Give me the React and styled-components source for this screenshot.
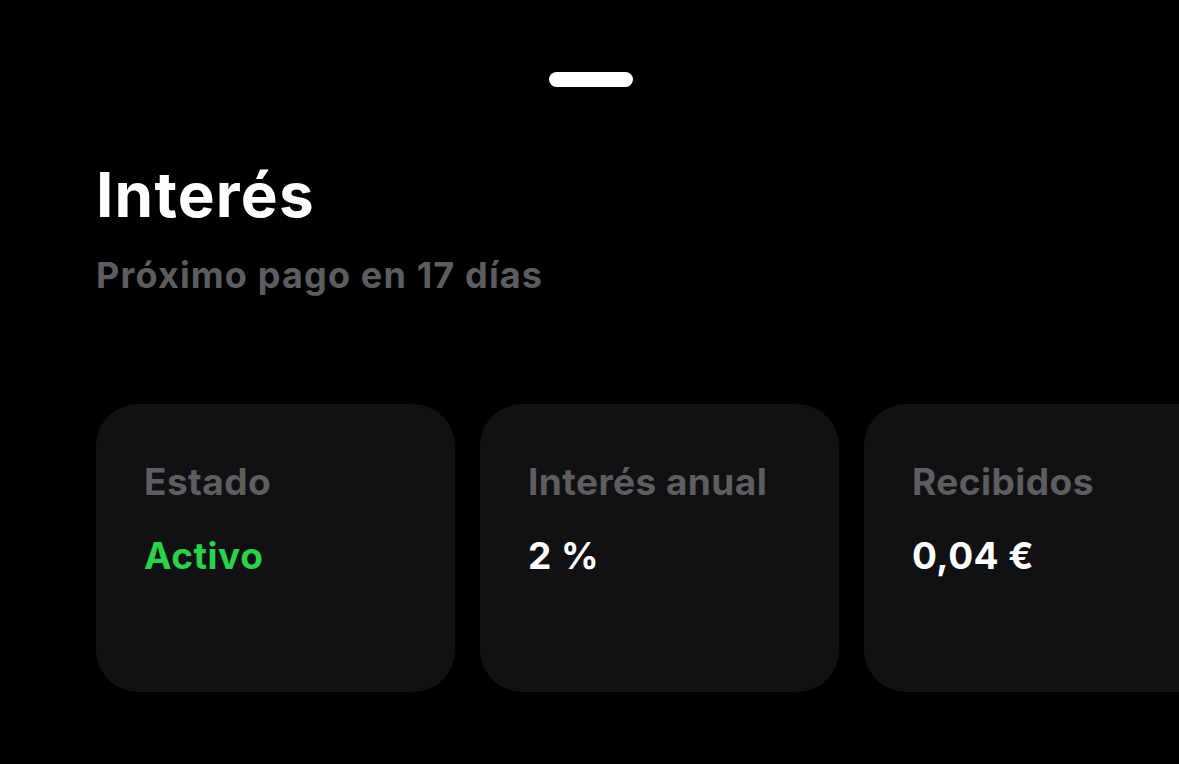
import styled, { createGlobalStyle } from "styled-components";

const GlobalStyle = createGlobalStyle`
  html, body {
    margin: 0;
    padding: 0;
    background: #000;
  }
  body {
    font-family: Inter, "Noto Sans", sans-serif;
    -webkit-font-smoothing: antialiased;
  }
`;

const stats = [
  { label: "Estado", value: "Activo", tone: "green" },
  { label: "Interés anual", value: "2 %" },
  { label: "Recibidos", value: "0,04 €" },
];

export default function App() {
  return (
    <>
      <GlobalStyle />
      <Sheet>
        <HandleRow>
          <Handle />
        </HandleRow>
        <Header>
          <Title>Interés</Title>
          <Subtitle>Próximo pago en 17 días</Subtitle>
        </Header>
        <CardRow>
          {stats.map((s) => (
            <Card key={s.label}>
              <Label>{s.label}</Label>
              <Value $tone={s.tone}>{s.value}</Value>
            </Card>
          ))}
        </CardRow>
      </Sheet>
    </>
  );
}

const Sheet = styled.div`
  width: 1179px;
  height: 764px;
  background: #000;
  overflow: hidden;
  display: flex;
  flex-direction: column;
  padding-top: 72px;
  box-sizing: border-box;
`;

const HandleRow = styled.div`
  display: flex;
  justify-content: center;
  padding-left: 2px;
`;

const Handle = styled.div`
  width: 84px;
  height: 15px;
  border-radius: 8px;
  background: #fff;
`;

const Header = styled.div`
  display: flex;
  flex-direction: column;
  padding: 70px 0 0 96px;
`;

const Title = styled.h1`
  margin: 0;
  font-size: 62px;
  font-weight: 700;
  line-height: 75px;
  letter-spacing: 1.2px;
  color: #fff;
`;

const Subtitle = styled.p`
  margin: 21px 0 0;
  font-size: 36px;
  font-weight: 700;
  line-height: 45px;
  letter-spacing: 1.15px;
  color: #5d5d60;
`;

const CardRow = styled.div`
  display: flex;
  gap: 25px;
  margin-top: 106px;
  padding-left: 96px;
`;

const Card = styled.div`
  flex: 0 0 359px;
  height: 288px;
  box-sizing: border-box;
  border-radius: 42px;
  background: #111113;
  padding: 55px 0 0 48px;
  display: flex;
  flex-direction: column;
  gap: 29px;
`;

const Label = styled.div`
  font-size: 37px;
  font-weight: 700;
  line-height: 45px;
  letter-spacing: 0.45px;
  color: #5e5e61;
  white-space: nowrap;
`;

const Value = styled.div`
  font-size: 37px;
  font-weight: 700;
  line-height: 45px;
  letter-spacing: 0.5px;
  color: ${(p) => (p.$tone === "green" ? "#2bd24b" : "#fff")};
  white-space: nowrap;
`;
